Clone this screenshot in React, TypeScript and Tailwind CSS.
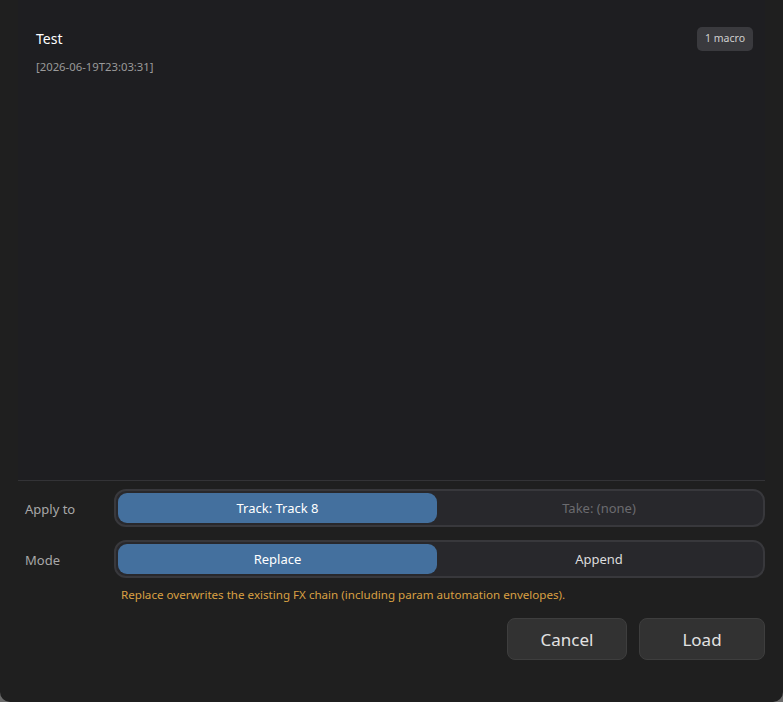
import React from 'react';

const font = { fontFamily: '"Noto Sans", "Open Sans", sans-serif' };

const Segmented = ({ left, right, rightDim }: { left: string; right: string; rightDim?: boolean }) => (
  <div className="flex-1 h-[38px] flex p-[2px] rounded-[12px] border-2 border-[#38383c] bg-[#28282c]">
    <div className="w-[319px] flex items-center justify-center pt-[2px] rounded-[9px] bg-[#44709e] text-[13px] text-white">
      {left}
    </div>
    <div className={`flex-1 flex items-center justify-center pt-[2px] text-[13px] ${rightDim ? 'text-[#6b6b6f]' : 'text-[#dcdcdc]'}`}>
      {right}
    </div>
  </div>
);

export default function App() {
  return (
    <div className="w-[783px] h-[702px] bg-[#6a6a6a] overflow-hidden" style={font}>
      <div className="w-full h-full bg-[#1f1f1f] rounded-b-[10px] flex flex-col">
        <div className="ml-[18px] mr-[18px] h-[481px] bg-[#1e1e21] border-b border-[#333336] pl-[18px] pr-[12px] pt-[27px]">
          <div className="flex items-start justify-between">
            <div className="text-[14px] leading-[24px] text-white">Test</div>
            <div className="h-[24px] px-[8px] flex items-center rounded-[5px] bg-[#3a3a3e] text-[10.5px] text-[#cfcfcf]">1 macro</div>
          </div>
          <div className="mt-[8px] text-[11.3px] text-[#9a9a9a]">[2026-06-19T23:03:31]</div>
        </div>
        <div className="pl-[25px] pr-[18px] pt-[8px] flex flex-col">
          <div className="flex items-center">
            <div className="w-[89px] pt-[3px] text-[13px] text-[#a8a8a8]">Apply to</div>
            <Segmented left="Track: Track 8" right="Take: (none)" rightDim />
          </div>
          <div className="flex items-center mt-[13px]">
            <div className="w-[89px] pt-[3px] text-[13px] text-[#a8a8a8]">Mode</div>
            <Segmented left="Replace" right="Append" />
          </div>
          <div className="ml-[96px] mt-[8px] text-[11.6px] text-[#d9a043]">
            Replace overwrites the existing FX chain (including param automation envelopes).
          </div>
          <div className="flex justify-end gap-[12px] mt-[15px]">
            <button className="w-[120px] h-[42px] rounded-[8px] bg-[#323232] border border-[#3e3e3e] text-[17px] text-[#e2e2e2]">Cancel</button>
            <button className="w-[126px] h-[42px] rounded-[8px] bg-[#323232] border border-[#3e3e3e] text-[17px] text-[#e2e2e2]">Load</button>
          </div>
        </div>
      </div>
    </div>
  );
}
